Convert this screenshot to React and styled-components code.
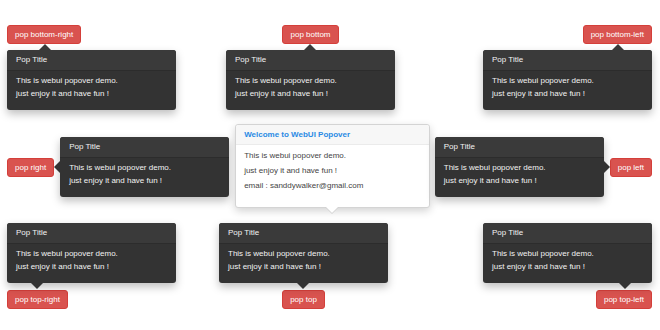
import React from "react";
import styled, { createGlobalStyle, css } from "styled-components";

const GlobalStyle = createGlobalStyle`
  html, body {
    margin: 0;
    padding: 0;
    background: #ffffff;
  }
  body {
    font-family: "Liberation Sans", Arial, sans-serif;
  }
`;

const DEMO_LINES = ["This is webui popover demo.", "just enjoy it and have fun !"];

const Popover = ({ arrowSide, arrowAt }) => {
  return (
    <DarkPop $side={arrowSide} $at={arrowAt}>
      <DarkTitle>Pop Title</DarkTitle>
      <DarkBody>
        {DEMO_LINES.map((line, idx) => (
          <Line key={idx}>{line}</Line>
        ))}
      </DarkBody>
    </DarkPop>
  );
};

const App = () => {
  return (
    <Page>
      <GlobalStyle />

      {/* popovers below their buttons */}
      <Row>
        <Group $align="flex-start">
          <PopButton>pop bottom-right</PopButton>
          <Popover arrowSide="top" arrowAt={32} />
        </Group>
        <Group $align="center" $left={50}>
          <PopButton>pop bottom</PopButton>
          <Popover arrowSide="top" arrowAt={78} />
        </Group>
        <Group $align="flex-end" $left={88}>
          <PopButton>pop bottom-left</PopButton>
          <Popover arrowSide="top" arrowAt={129} />
        </Group>
      </Row>

      {/* side popovers and the main one */}
      <MiddleRow>
        <SideGroup>
          <PopButton>pop right</PopButton>
          <Popover arrowSide="left" arrowAt={24} />
        </SideGroup>
        <LightPop>
          <LightTitle>Welcome to WebUI Popover</LightTitle>
          <LightBody>
            {DEMO_LINES.map((line, idx) => (
              <LightLine key={idx}>{line}</LightLine>
            ))}
            <LightLine>email : sanddywalker@gmail.com</LightLine>
          </LightBody>
        </LightPop>
        <SideGroup $left={5}>
          <Popover arrowSide="right" arrowAt={24} />
          <PopButton>pop left</PopButton>
        </SideGroup>
      </MiddleRow>

      {/* popovers above their buttons */}
      <Row $top={9} $gap={7}>
        <Group $align="flex-start">
          <Popover arrowSide="bottom" arrowAt={24} />
          <PopButton>pop top-right</PopButton>
        </Group>
        <Group $align="center" $left={43}>
          <Popover arrowSide="bottom" arrowAt={78} />
          <PopButton>pop top</PopButton>
        </Group>
        <Group $align="flex-end" $left={95}>
          <Popover arrowSide="bottom" arrowAt={136} />
          <PopButton>pop top-left</PopButton>
        </Group>
      </Row>
    </Page>
  );
};

const Page = styled.div`
  width: 660px;
  height: 330px;
  box-sizing: border-box;
  padding: 25px 8px 0 7px;
  overflow: hidden;
`;

const Row = styled.div`
  display: flex;
  align-items: flex-start;
  margin-top: ${(props) => props.$top || 0}px;
  --group-gap: ${(props) => props.$gap || 6}px;
`;

const MiddleRow = styled.div`
  display: flex;
  align-items: flex-start;
  margin-top: 14px;
  height: 90px;
`;

const Group = styled.div`
  display: flex;
  flex-direction: column;
  align-items: ${(props) => props.$align};
  gap: var(--group-gap);
  width: 169px;
  margin-left: ${(props) => props.$left || 0}px;
`;

const SideGroup = styled.div`
  display: flex;
  align-items: center;
  gap: 6px;
  margin-top: 13px;
  margin-left: ${(props) => props.$left || 0}px;
`;

const PopButton = styled.button`
  height: 19px;
  padding: 0 7px;
  border: 1px solid #d43f3a;
  border-radius: 3px;
  background: #d9534f;
  color: #ffffff;
  font-family: "Liberation Sans", Arial, sans-serif;
  font-size: 8px;
  line-height: 17px;
  white-space: nowrap;
  cursor: pointer;
`;

const arrowStyles = {
  top: css`
    top: -6px;
    left: ${(props) => props.$at}px;
    border-width: 0 6px 6px 6px;
    border-color: transparent transparent #3a3a3a transparent;
  `,
  bottom: css`
    bottom: -6px;
    left: ${(props) => props.$at}px;
    border-width: 6px 6px 0 6px;
    border-color: #333333 transparent transparent transparent;
  `,
  left: css`
    left: -6px;
    top: ${(props) => props.$at}px;
    border-width: 6px 6px 6px 0;
    border-color: transparent #333333 transparent transparent;
  `,
  right: css`
    right: -6px;
    top: ${(props) => props.$at}px;
    border-width: 6px 0 6px 6px;
    border-color: transparent transparent transparent #333333;
  `,
};

const DarkPop = styled.div`
  position: relative;
  width: 169px;
  height: 60px;
  box-sizing: border-box;
  background: #333333;
  border-radius: 3px;
  box-shadow: 0 4px 8px rgba(0, 0, 0, 0.25);
  color: #f2f2f2;
  &::before {
    content: "";
    position: absolute;
    width: 0;
    height: 0;
    border-style: solid;
    ${(props) => arrowStyles[props.$side]}
  }
`;

const DarkTitle = styled.div`
  height: 20px;
  padding: 0 9px;
  background: #3a3a3a;
  border-bottom: 1px solid #2c2c2c;
  border-radius: 3px 3px 0 0;
  font-size: 8px;
  line-height: 20px;
`;

const DarkBody = styled.div`
  padding: 3px 9px 0;
`;

const Line = styled.div`
  font-size: 8px;
  line-height: 13px;
  white-space: nowrap;
`;

const LightPop = styled.div`
  position: relative;
  width: 197px;
  height: 84px;
  margin-left: 6px;
  box-sizing: border-box;
  background: #ffffff;
  border: 1px solid #d4d4d4;
  border-radius: 3px;
  box-shadow: 0 3px 8px rgba(0, 0, 0, 0.18);
  &::before,
  &::after {
    content: "";
    position: absolute;
    left: 50%;
    width: 0;
    height: 0;
    border-style: solid;
  }
  &::before {
    bottom: -7px;
    margin-left: -7px;
    border-width: 7px 7px 0 7px;
    border-color: #cfcfcf transparent transparent transparent;
  }
  &::after {
    bottom: -6px;
    margin-left: -6px;
    border-width: 6px 6px 0 6px;
    border-color: #ffffff transparent transparent transparent;
  }
`;

const LightTitle = styled.div`
  height: 19px;
  padding: 0 8px;
  background: #f7f7f7;
  border-bottom: 1px solid #ebebeb;
  border-radius: 3px 3px 0 0;
  color: #2a8ae4;
  font-size: 8px;
  font-weight: bold;
  line-height: 19px;
`;

const LightBody = styled.div`
  padding: 3px 8px 0;
`;

const LightLine = styled.div`
  color: #444444;
  font-size: 8px;
  line-height: 15px;
  white-space: nowrap;
`;

export default App;
